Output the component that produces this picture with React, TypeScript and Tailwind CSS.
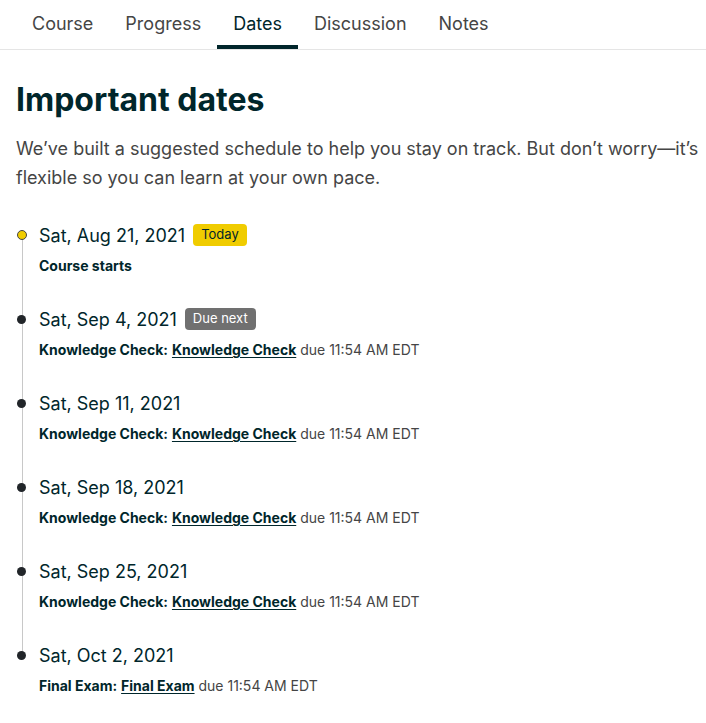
const TABS = ["Course", "Progress", "Dates", "Discussion", "Notes"];

type DateItem = {
  date: string;
  badge?: "today" | "next";
  kind: string;
  link?: string;
  due?: string;
};

const ITEMS: DateItem[] = [
  { date: "Sat, Aug 21, 2021", badge: "today", kind: "Course starts" },
  { date: "Sat, Sep 4, 2021", badge: "next", kind: "Knowledge Check:", link: "Knowledge Check", due: "due 11:54 AM EDT" },
  { date: "Sat, Sep 11, 2021", kind: "Knowledge Check:", link: "Knowledge Check", due: "due 11:54 AM EDT" },
  { date: "Sat, Sep 18, 2021", kind: "Knowledge Check:", link: "Knowledge Check", due: "due 11:54 AM EDT" },
  { date: "Sat, Sep 25, 2021", kind: "Knowledge Check:", link: "Knowledge Check", due: "due 11:54 AM EDT" },
  { date: "Sat, Oct 2, 2021", kind: "Final Exam:", link: "Final Exam", due: "due 11:54 AM EDT" },
];

function Badge({ type }: { type: "today" | "next" }) {
  if (type === "today") {
    return (
      <span className="ml-2 flex h-[22px] items-center rounded-[4px] bg-[#f0cc00] px-[8px] text-[13px] text-[#00262b]">
        Today
      </span>
    );
  }
  return (
    <span className="ml-2 flex h-[22px] items-center rounded-[4px] bg-[#707070] px-[8px] text-[13px] text-white">
      Due next
    </span>
  );
}

function TimelineItem({ item, first, last }: { item: DateItem; first: boolean; last: boolean }) {
  return (
    <div className="flex">
      <div className="relative w-[23px] shrink-0">
        {!last && <div className="absolute left-[5.5px] top-[14px] h-[84px] w-px bg-[#c8c8c8]" />}
        {first ? (
          <div className="absolute left-[1px] top-[9px] h-[10px] w-[10px] rounded-full border border-[#454545] bg-[#f0cc00]" />
        ) : (
          <div className="absolute left-[1px] top-[9.5px] h-[9px] w-[9px] rounded-full bg-[#212529]" />
        )}
      </div>
      <div className="pb-[29px]">
        <div className="flex h-[28px] items-center">
          <span className="text-[18px] text-[#00262b]">{item.date}</span>
          {item.badge && <Badge type={item.badge} />}
        </div>
        <div className="mt-[7px] text-[14px] leading-[20px] text-[#00262b]">
          <span className="font-bold">{item.kind}</span>
          {item.link && (
            <>
              {" "}
              <a className="font-bold underline underline-offset-2">{item.link}</a>{" "}
              <span className="text-[#454545]">{item.due}</span>
            </>
          )}
        </div>
      </div>
    </div>
  );
}

export default function App() {
  return (
    <div className="min-h-screen bg-white font-['Inter',sans-serif]">
      <nav className="flex h-[50px] border-b border-[#e5e5e5] px-4">
        {TABS.map((tab) => {
          const active = tab === "Dates";
          return (
            <div
              key={tab}
              className={`flex h-[49px] items-center border-b-4 px-4 pt-[2px] text-[18px] ${
                active ? "border-[#00262b] text-[#00262b]" : "border-transparent text-[#454545]"
              }`}
            >
              {tab}
            </div>
          );
        })}
      </nav>
      <main className="pl-4 pr-[2px]">
        <h1 className="mt-[30px] text-[32px] font-bold leading-[40px] text-[#00262b]">Important dates</h1>
        <p className="mt-[14px] text-[18px] leading-[29px] text-[#454545]">
          We’ve built a suggested schedule to help you stay on track. But don’t worry—it’s flexible so you can learn
          at your own pace.
        </p>
        <div className="mt-[29px]">
          {ITEMS.map((item, i) => (
            <TimelineItem key={item.date} item={item} first={i === 0} last={i === ITEMS.length - 1} />
          ))}
        </div>
      </main>
    </div>
  );
}
